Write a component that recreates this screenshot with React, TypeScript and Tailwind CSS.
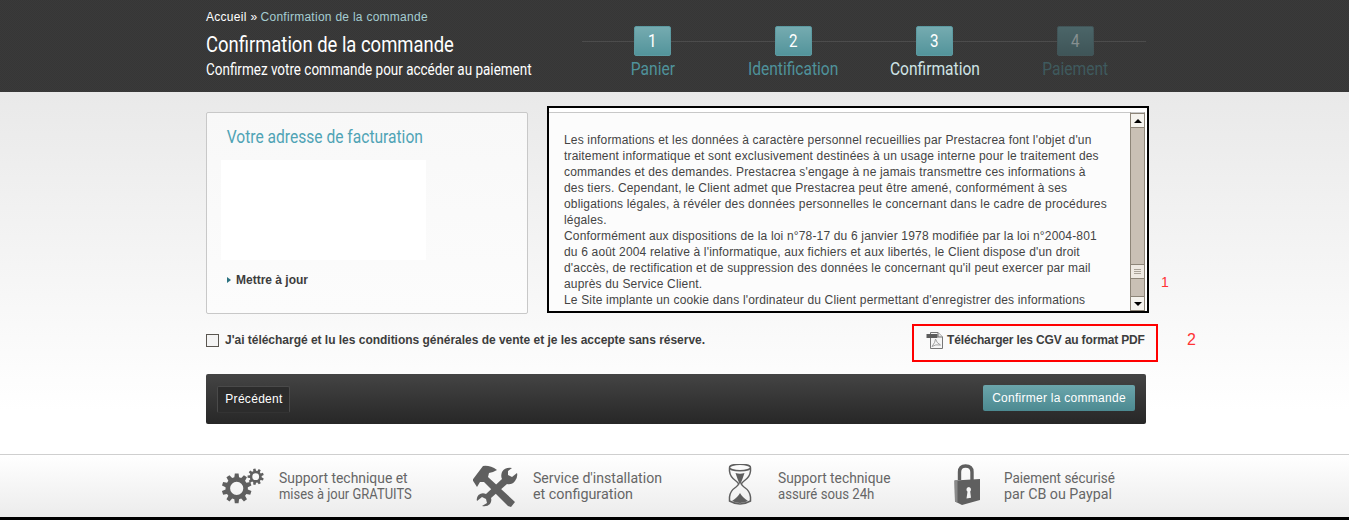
const narrow = "font-['Roboto',sans-serif] whitespace-nowrap";

function gearPath(cx: number, cy: number, rOut: number, rIn: number, rHole: number, teeth: number) {
  let d = "";
  const step = (Math.PI * 2) / teeth;
  for (let i = 0; i < teeth; i++) {
    const a = i * step + step / 2;
    const pts: [number, number][] = [
      [rIn, a - step * 0.34],
      [rOut, a - step * 0.2],
      [rOut, a + step * 0.2],
      [rIn, a + step * 0.34],
    ];
    pts.forEach(([r, t], j) => {
      d += `${i === 0 && j === 0 ? "M" : "L"}${(cx + r * Math.cos(t)).toFixed(2)} ${(cy + r * Math.sin(t)).toFixed(2)}`;
    });
  }
  d += "Z";
  d += `M${cx - rHole} ${cy}a${rHole} ${rHole} 0 1 0 ${rHole * 2} 0a${rHole} ${rHole} 0 1 0 ${-rHole * 2} 0Z`;
  return d;
}

function Gears() {
  return (
    <svg width="44" height="44" viewBox="7 4 44 44" className="shrink-0">
      <path fillRule="evenodd" fill="#5f5f5f" d={gearPath(21.7, 28.3, 15, 11.2, 6.6, 10)} />
      <path fillRule="evenodd" fill="#5f5f5f" d={gearPath(40.7, 16.7, 8.2, 6, 3.4, 9)} />
    </svg>
  );
}

function Tools() {
  return (
    <svg width="46" height="44" viewBox="8 4 46 44" className="shrink-0">
      <g fill="#5f5f5f">
        <path d="M7.5 20 L18 6 Q25 5 32 10 L28 12 L24 13 L23 17 L50 42 L46 47 L43 46 L19 22 L15 22 L12 27 Z" />
        <path d="M47 8 Q40 7 37 12 Q35.5 16 37 19 L21 34 Q17 32 13.5 35 Q11 38 12 41 L17 37 L21 39 L22 43 L17 46 Q22 47 25 44 Q27 41 26 38 L42 24 Q47 25 50 21 Q53 17 52 13 L47 17 L43 15 L43 11 Z" />
      </g>
    </svg>
  );
}

function Hourglass() {
  return (
    <svg width="26" height="44" viewBox="8 4 26 44" className="shrink-0">
      <g fill="none" stroke="#5f5f5f" strokeWidth="1.5">
        <ellipse cx="20" cy="7.5" rx="10.5" ry="3.2" />
        <path d="M9.5 8 V11 Q10 17 16 21 Q18.5 23 18.5 24 Q18.5 25 16 27 Q10 31 9.5 37 V41 Q20 47 30.5 41 V37 Q30 31 24 27 Q21.5 25 21.5 24 Q21.5 23 24 21 Q30 17 30.5 11 V8" />
      </g>
      <path fill="#5f5f5f" d="M15.5 13 Q20 14.5 24.5 13 Q23 18 20 25 Q17 18 15.5 13 Z" />
      <path fill="#5f5f5f" d="M20 33 Q22 37 28 41 Q20 45 12 41 Q18 37 20 33 Z" />
    </svg>
  );
}

function Lock() {
  return (
    <svg width="30" height="44" viewBox="8 4 30 44" className="shrink-0">
      <path fill="none" stroke="#5f5f5f" strokeWidth="3.4" d="M14.5 20 V12 Q14.5 6 20.5 6 Q27 6 27 12 V20" />
      <path fill="#5f5f5f" fillRule="evenodd" d="M9.5 20.5 L35 19 V40 L17 45 L10 41.5 Z M24 27 a2.6 2.6 0 0 0 -1.5 4.7 L21.5 38.5 L26 37.7 L25.2 31.4 A2.6 2.6 0 0 0 24 27 Z" />
      <path fill="#8a8a8a" d="M9.5 20.5 L12.5 20.3 V42.8 L10 41.5 Z" />
    </svg>
  );
}

function PdfIcon() {
  return (
    <svg width="18" height="18" viewBox="0 0 18 18" className="shrink-0">
      <path d="M4.5 1.5 H12 L16.5 6 V17.5 H4.5 Z" fill="#f6f6f6" stroke="#777" />
      <path d="M12 1.5 V6 H16.5" fill="#e2e2e2" stroke="#777" />
      <rect x="0.5" y="3" width="11" height="4" fill="#5c5c5c" />
      <path d="M6 15.5 Q9.5 11 9.5 8 Q10.5 12 14.5 14 Q9.5 13 6 15.5 Z" fill="none" stroke="#999" strokeWidth="0.9" />
    </svg>
  );
}

function Step({ n, label, state }: { n: number; label: string; state: "done" | "current" | "todo" }) {
  const box = state === "todo"
    ? "bg-[linear-gradient(#4b6568,#3f5558)] text-[#868f90] border-[#425558]"
    : "bg-[linear-gradient(#75abb0,#53949b)] text-white border-[#5c9aa1]";
  const text = state === "current" ? "text-[#cfe3e5]" : state === "done" ? "text-[#4f929b]" : "text-[#3f5a5e]";
  return (
    <div className="flex flex-col items-center">
      <div className={`w-[37px] h-[30px] rounded-[2px] border flex items-center justify-center text-[19px] ${narrow} ${box}`}>
        <span className="scale-x-[.8]">{n}</span>
      </div>
      <div className={`mt-[2px] text-[19px] leading-[22px] scale-x-[.82] ${narrow} ${text}`}>{label}</div>
    </div>
  );
}

function Feature({ icon, lines, iconBox, textW }: { icon: React.ReactNode; lines: [React.ReactNode, React.ReactNode]; iconBox: string; textW: string }) {
  return (
    <div className={`flex items-center ${textW}`}>
      <div className={`flex items-center ${iconBox}`}>{icon}</div>
      <div className={`text-[15.5px] leading-[16px] text-[#666] ${narrow}`}>
        {lines[0]}
        {lines[1]}
      </div>
    </div>
  );
}

const legal = [
  "Les informations et les données à caractère personnel recueillies par Prestacrea font l'objet d'un",
  "traitement informatique et sont exclusivement destinées à un usage interne pour le traitement des",
  "commandes et des demandes. Prestacrea s'engage à ne jamais transmettre ces informations à",
  "des tiers. Cependant, le Client admet que Prestacrea peut être amené, conformément à ses",
  "obligations légales, à révéler des données personnelles le concernant dans le cadre de procédures",
  "légales.",
  "Conformément aux dispositions de la loi n°78-17 du 6 janvier 1978 modifiée par la loi n°2004-801",
  "du 6 août 2004 relative à l'informatique, aux fichiers et aux libertés, le Client dispose d'un droit",
  "d'accès, de rectification et de suppression des données le concernant qu'il peut exercer par mail",
  "auprès du Service Client.",
  "Le Site implante un cookie dans l'ordinateur du Client permettant d'enregistrer des informations",
  "relatives à la navigation de l'ordinateur sur le Site et de faciliter les visites ultérieures du Client.",
];

function ScrollBtn({ up }: { up?: boolean }) {
  return (
    <div className="h-[15px] bg-[#f5f3ee] border-y border-[#8d8578] flex items-center justify-center">
      <div className={`w-0 h-0 border-x-[4px] border-x-transparent ${up ? "border-b-[4px] border-b-black" : "border-t-[4px] border-t-black"}`} />
    </div>
  );
}

export default function App() {
  return (
    <div className="w-[1349px] h-[520px] overflow-hidden bg-black font-['Liberation_Sans',sans-serif] flex flex-col">
      <header className="h-[92px] shrink-0 bg-[repeating-conic-gradient(#3a3a3a_0_25%,#363636_0_50%)] bg-[length:2px_2px]">
        <div className="ml-[206px] w-[940px] flex">
          <div className="w-[376px]">
            <div className="pt-[10px] text-[12px] leading-[14px] tracking-[0.27px] text-white">
              Accueil<span className="ml-[4px] mr-[3px]">»</span><span className="text-[#a5cdd2]">Confirmation de la commande</span>
            </div>
            <div className={`mt-[9px] text-[22px] leading-[24px] text-white origin-left scale-x-[.838] ${narrow}`}>Confirmation de la commande</div>
            <div className={`mt-[3px] text-[16px] leading-[20px] text-white origin-left scale-x-[.842] ${narrow}`}>Confirmez votre commande pour accéder au paiement</div>
          </div>
          <div className="w-[564px] pt-[26px]">
            <div className="grid grid-cols-4 bg-[linear-gradient(#4c4c4c,#4c4c4c)] bg-no-repeat bg-[length:100%_1px] bg-[position:0_15px]">
              <Step n={1} label="Panier" state="done" />
              <Step n={2} label="Identification" state="done" />
              <Step n={3} label="Confirmation" state="current" />
              <Step n={4} label="Paiement" state="todo" />
            </div>
          </div>
        </div>
      </header>

      <main className="relative h-[362px] shrink-0 bg-[linear-gradient(#e9e9e9,#ffffff_88%)]">
        <div className="ml-[206px] w-[940px]">
          <div className="flex items-start justify-between pt-[14px]">
            <section className="mt-[6px] w-[322px] h-[202px] rounded-[2px] border border-[#c8c8c8] bg-[linear-gradient(#f8f8f8,#fcfcfc)] pl-[14px] pt-[13px]">
              <h2 className={`pl-[7px] text-[19px] leading-[22px] text-[#4fa3b5] origin-left scale-x-[.82] ${narrow}`}>Votre adresse de facturation</h2>
              <div className="mt-[12px] w-[205px] h-[100px] bg-white" />
              <div className="mt-[13px] pl-[6px] flex items-center gap-[5px] text-[12px] leading-[14px] font-bold text-[#3d3d3d]">
                <span className="w-0 h-0 border-y-[3.5px] border-y-transparent border-l-[4px] border-l-[#2b7280]" />
                Mettre à jour
              </div>
            </section>
            <section className="-mr-[3px] w-[602px] h-[207px] border-2 border-black flex bg-white pt-[4px]">
              <div className="flex-1 h-full overflow-hidden border-t border-[#c8c8c8] bg-[#fcfcfc] pl-[15px] pt-[19px] text-[12px] leading-[16px] tracking-[0.17px] text-[#444] whitespace-nowrap">
                {legal.map((l) => <div key={l}>{l}</div>)}
              </div>
              <div className="w-[15px] mr-[2px] h-full flex flex-col bg-[#c9c0b5] border-x border-[#8d8578] border-t border-t-[#c8c8c8]">
                <ScrollBtn up />
                <div className="flex-1 flex flex-col justify-end pb-[17px]">
                  <div className="h-[15px] bg-[#eee9e2] border-y border-[#8d8578] flex flex-col items-center justify-center gap-[1px]">
                    <div className="w-[7px] h-px bg-[#a9a297]" />
                    <div className="w-[7px] h-px bg-[#a9a297]" />
                    <div className="w-[7px] h-px bg-[#a9a297]" />
                  </div>
                </div>
                <ScrollBtn />
              </div>
            </section>
          </div>

          <div className="flex items-center justify-between mt-[10px]">
            <label className="-mt-[6px] flex items-center gap-[6px] text-[12px] leading-[14px] font-bold tracking-[-0.02px] text-[#3d3d3d]">
              <span className="w-[13px] h-[13px] border border-[#5a5650] bg-[#f4f4f4]" />
              J'ai téléchargé et lu les conditions générales de vente et je les accepte sans réserve.
            </label>
            <div className="-mr-[12px] w-[246px] h-[38px] border-2 border-[#ff0000] flex items-center pl-[12px] pb-[6px] gap-[3px] text-[12px] font-bold tracking-[-0.15px] text-[#3d3d3d]">
              <PdfIcon />
              Télécharger les CGV au format PDF
            </div>
          </div>

          <div className="mt-[12px] h-[50px] rounded-[2px] bg-[linear-gradient(#444444,#272727)] flex items-center justify-between pl-[11px] pr-[11px]">
            <button className="w-[73px] h-[27px] rounded-[2px] border border-[#4a4a4a] border-b-[#333] bg-[#2c2c2c] pl-[1px] text-[12px] tracking-[0.3px] text-white">Précédent</button>
            <button className="w-[152px] h-[26px] -mt-[2px] rounded-[2px] bg-[linear-gradient(#6ba5ab,#4c8a91)] text-[12px] tracking-[0.27px] text-white">Confirmer la commande</button>
          </div>
        </div>
        <span className="absolute left-[1161px] top-[182px] text-[14px] leading-[16px] text-[#f33]">1</span>
        <span className="absolute left-[1187px] top-[240px] text-[16px] leading-[16px] text-[#f33]">2</span>
      </main>

      <footer className="h-[63px] shrink-0 border-t border-[#cfcfcf] bg-[linear-gradient(#ffffff,#ececec)] pl-[222px] flex items-center">
        <Feature
          icon={<Gears />}
          lines={[
            <div className="origin-left scale-x-[.896]">Support technique et</div>,
            <div className="origin-left scale-x-[.836]">mises à jour GRATUITS</div>,
          ]}
          iconBox="w-[57px]"
          textW="w-[251px]"
        />
        <Feature
          icon={<Tools />}
          lines={[
            <div className="origin-left scale-x-[.91]">Service d'installation</div>,
            <div className="origin-left scale-x-[.925]">et configuration</div>,
          ]}
          iconBox="w-[60px]"
          textW="w-[255px]"
        />
        <Feature
          icon={<Hourglass />}
          lines={[
            <div className="origin-left scale-x-[.89]">Support technique</div>,
            <div className="origin-left scale-x-[.85]">assuré sous 24h</div>,
          ]}
          iconBox="w-[50px]"
          textW="w-[225px]"
        />
        <Feature
          icon={<Lock />}
          lines={[
            <div className="origin-left scale-x-[.87]">Paiement sécurisé</div>,
            <div className="origin-left scale-x-[.92]">par CB ou Paypal</div>,
          ]}
          iconBox="w-[51px]"
          textW="w-[200px]"
        />
      </footer>
    </div>
  );
}
